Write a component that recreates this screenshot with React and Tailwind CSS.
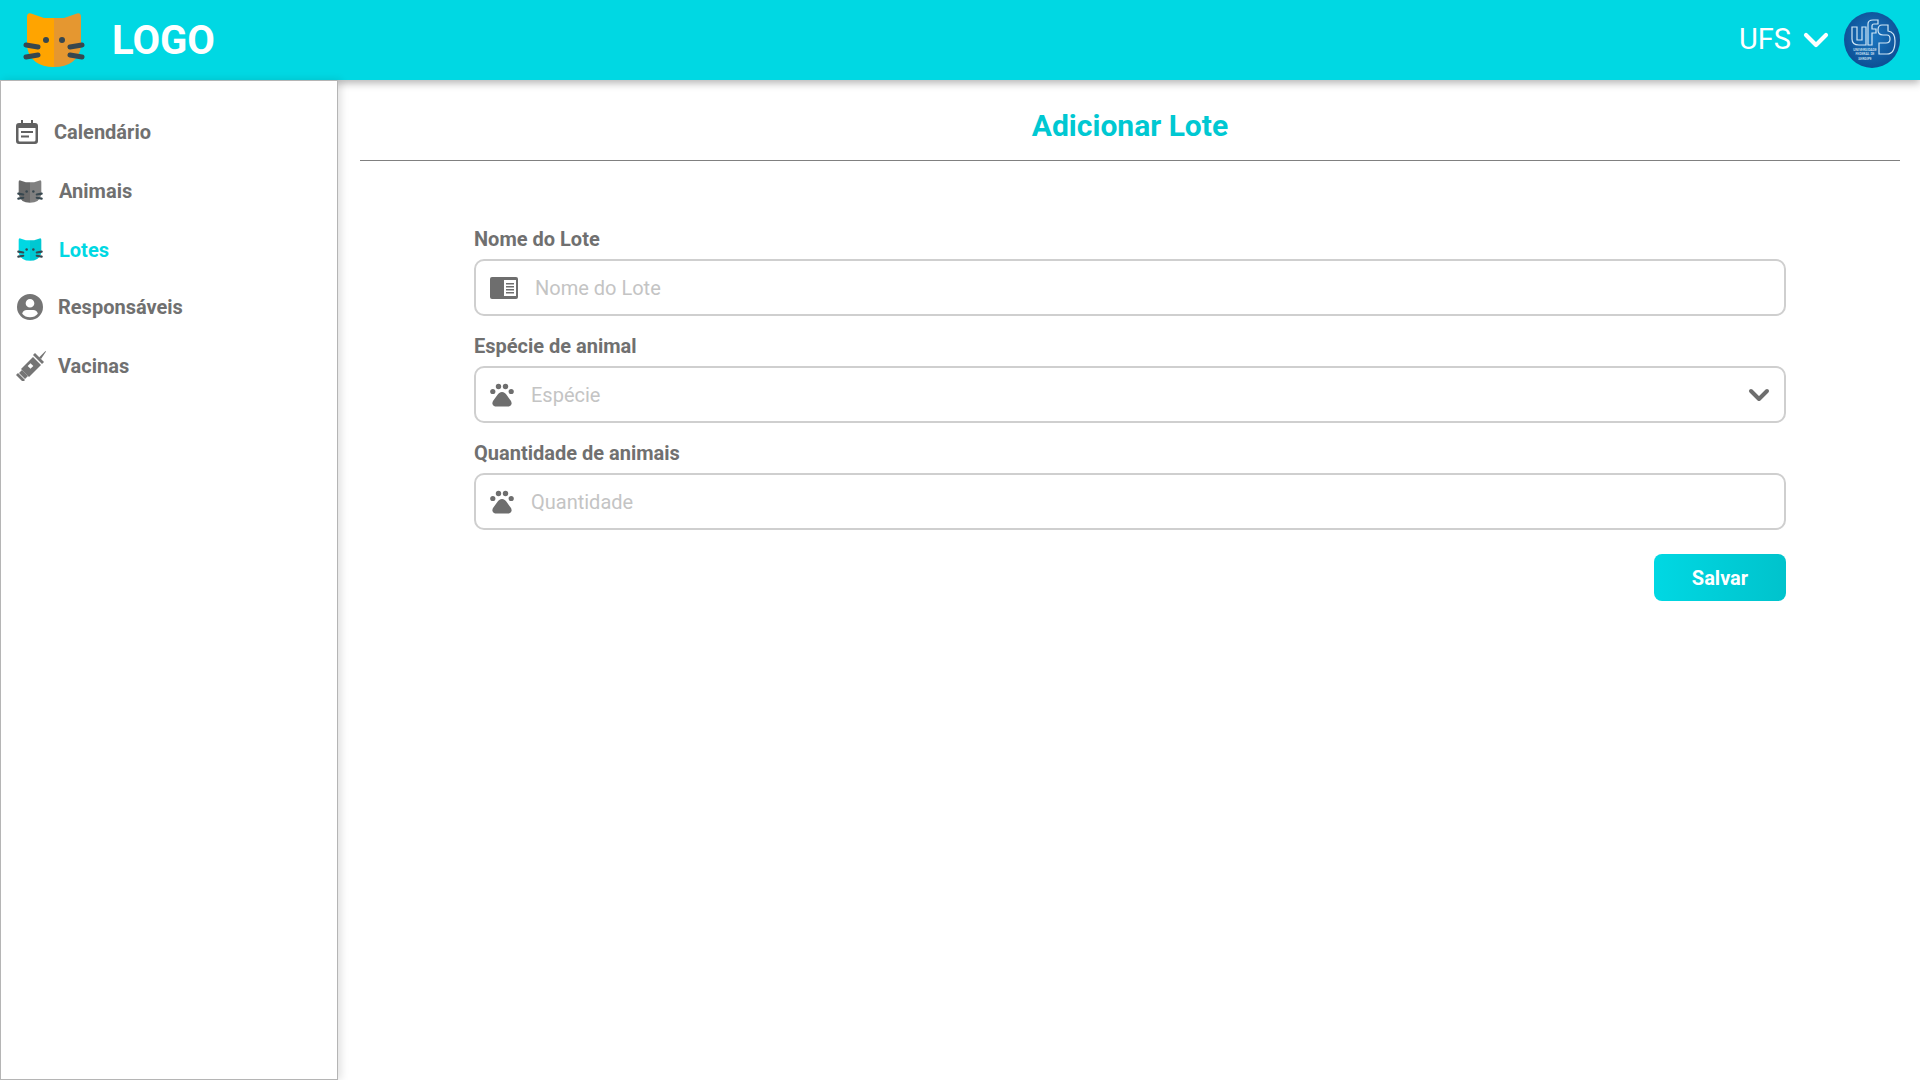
import { ChevronDown } from 'lucide-react'

function CatIcon({ left = '#ffa400', right = '#e59730', whisker = '#37474f', className = '' }) {
  return (
    <svg viewBox="0 0 62 54" className={className}>
      <path d="M31 5 L21 5 L8 0.5 Q4 -0.5 4 4 L4 34 Q8 54 31 54 Z" fill={left} />
      <path d="M31 5 L41 5 L54 0.5 Q58 -0.5 58 4 L58 34 Q54 54 31 54 Z" fill={right} />
      <circle cx="23" cy="27" r="3" fill={whisker} />
      <circle cx="39" cy="27" r="3" fill={whisker} />
      <g stroke={whisker} strokeWidth="5" strokeLinecap="round">
        <path d="M3 32 L15 34" />
        <path d="M3 44 L15 42" />
        <path d="M59 32 L47 34" />
        <path d="M59 44 L47 42" />
      </g>
    </svg>
  )
}

function UfsLogo() {
  return (
    <svg viewBox="0 0 56 56" className="w-[56px] h-[56px]">
      <defs>
        <radialGradient id="ufsBg" cx="50%" cy="45%" r="55%">
          <stop offset="0%" stopColor="#1b78c2" />
          <stop offset="100%" stopColor="#0d4f94" />
        </radialGradient>
      </defs>
      <circle cx="28" cy="28" r="28" fill="url(#ufsBg)" />
      <g fill="none" stroke="#cfe6f5" strokeWidth="1.2">
        <path d="M8 15 V27 Q8 33 15 33 H22 V15 H18 V28 H13 V15 Z" />
        <path d="M24 33 V12 Q24 8 29 8 H34 V12 H30 Q28 12 28 14 V17 H32 V21 H28 V33 Z" />
        <path d="M44 13 H38 Q34 13 34 18 Q34 23 39 23 H43 Q46 23 46 27 Q46 31 42 31 H35 V42 H43 Q51 42 51 29 Q51 20 44 19 Z" />
      </g>
      <g fill="#dbeaf5" fontFamily="Roboto, sans-serif" fontSize="3.4" fontWeight="500" textAnchor="middle">
        <text x="21" y="38.5">UNIVERSIDADE</text>
        <text x="21" y="43">FEDERAL DE</text>
        <text x="21" y="47.5">SERGIPE</text>
      </g>
    </svg>
  )
}

function CalendarIcon() {
  return (
    <svg viewBox="0 0 22 24" className="w-[22px] h-[24px]" fill="#616161">
      <path d="M5 0 H7 V3 H15 V0 H17 V3 H19 Q22 3 22 6 V21 Q22 24 19 24 H3 Q0 24 0 21 V6 Q0 3 3 3 H5 Z M2.5 8 V20 Q2.5 21.5 4 21.5 H18 Q19.5 21.5 19.5 20 V8 Z" />
      <rect x="5" y="11" width="12" height="2" />
      <rect x="5" y="15.5" width="8" height="2" />
    </svg>
  )
}

function UserIcon() {
  return (
    <svg viewBox="0 0 24 24" className="w-[26px] h-[26px]" fill="#757575">
      <path d="M12 0 A12 12 0 1 0 12 24 A12 12 0 1 0 12 0 Z M12 4.5 A4 4 0 1 1 12 12.5 A4 4 0 1 1 12 4.5 Z M12 21.5 Q7.5 21.5 4.8 18.2 Q5.6 14.8 9 14.8 H15 Q18.4 14.8 19.2 18.2 Q16.5 21.5 12 21.5 Z" />
    </svg>
  )
}

function SyringeIcon() {
  return (
    <svg viewBox="0 0 30 30" className="w-[30px] h-[30px]">
      <g fill="#757575">
        <path d="M5 18 L17 6 L25 14 L13 26 Z" />
        <path d="M0 24 L2 22 L9 29 L7 31 Z" />
        <path d="M3 22 L6 19 L12 25 L9 28 Z" />
        <path d="M17 4 L19 2 L28 11 L26 13 Z" />
        <path d="M23 6.5 L29.5 0 L30 0.5 L25 8 Z" />
      </g>
      <rect x="12.5" y="13" width="4" height="4" fill="#ffffff" transform="rotate(45 14.5 15)" />
    </svg>
  )
}

function BookIcon() {
  return (
    <svg viewBox="0 0 28 22" className="w-[28px] h-[22px]">
      <rect width="28" height="22" rx="2" fill="#6e6e6e" />
      <rect x="14" y="3" width="12" height="16" fill="#ffffff" />
      <g fill="#6e6e6e">
        <rect x="16" y="6" width="8" height="1.5" />
        <rect x="16" y="9" width="8" height="1.5" />
        <rect x="16" y="12" width="8" height="1.5" />
        <rect x="16" y="15" width="8" height="1.5" />
      </g>
    </svg>
  )
}

function PawIcon() {
  return (
    <svg viewBox="0 0 24 24" className="w-[24px] h-[24px]" fill="#6e6e6e">
      <circle cx="2.8" cy="8.5" r="2.6" />
      <circle cx="8.5" cy="3.5" r="2.7" />
      <circle cx="15.5" cy="3.5" r="2.7" />
      <circle cx="21.2" cy="8.5" r="2.6" />
      <path d="M12 9 Q15 9 17 12.5 L21 18 Q23 22.5 19 23.5 H5 Q1 22.5 3 18 L7 12.5 Q9 9 12 9 Z" />
    </svg>
  )
}

function NavItem({ icon, label, active, textClass, rowClass }) {
  return (
    <div className={`flex items-center ${rowClass}`}>
      {icon}
      <span className={`text-[20px] font-bold ${textClass} ${active ? 'text-[#00d8e3]' : 'text-[#707070]'}`}>{label}</span>
    </div>
  )
}

function Field({ label, icon, placeholder, textClass, chevron }) {
  return (
    <div className="flex flex-col">
      <label className="text-[20px] font-bold text-[#707070] h-[28px] leading-[28px] mb-[6px]">{label}</label>
      <div className="h-[57px] border-2 border-[#cfcfcf] rounded-[10px] flex items-center pl-[14px] pr-[9px] bg-white">
        {icon}
        <span className={`text-[20px] text-[#c4c4c4] flex-1 ${textClass}`}>{placeholder}</span>
        {chevron && <ChevronDown size={32} strokeWidth={3} color="#6e6e6e" />}
      </div>
    </div>
  )
}

export default function App() {
  return (
    <div className="w-[1920px] h-[1080px] flex flex-col bg-white overflow-hidden font-['Roboto',sans-serif]">
      <header className="relative z-10 h-[80px] shrink-0 bg-[#00d8e3] shadow-[0_3px_8px_rgba(0,0,0,0.3)] flex items-center justify-between pl-[23px] pr-[20px]">
        <div className="flex items-center">
          <CatIcon className="w-[62px] h-[54px]" />
          <span className="ml-[27px] mt-[2px] text-[40px] font-bold text-white">LOGO</span>
        </div>
        <div className="flex items-center">
          <span className="text-[29px] text-white">UFS</span>
          <ChevronDown size={40} strokeWidth={2.5} color="#ffffff" className="ml-[5px]" />
          <div className="ml-[8px]"><UfsLogo /></div>
        </div>
      </header>
      <div className="flex flex-1 min-h-0">
        <aside className="relative z-20 w-[338px] shrink-0 border border-[#b5b5b5] shadow-[3px_0_8px_rgba(0,0,0,0.12)] pt-[22px] bg-white">
          <NavItem rowClass="pl-[15px] h-[58px]" icon={<CalendarIcon />} label="Calendário" textClass="ml-[16px]" />
          <NavItem rowClass="pl-[16px] h-[60px]" icon={<CatIcon left="#6a6a6a" right="#808080" className="w-[26px] h-[23px]" />} label="Animais" textClass="ml-[16px]" />
          <NavItem rowClass="pl-[16px] h-[57px]" active icon={<CatIcon left="#00d8e3" right="#00c8d2" className="w-[26px] h-[23px]" />} label="Lotes" textClass="ml-[16px]" />
          <NavItem rowClass="pl-[16px] h-[57px]" icon={<UserIcon />} label="Responsáveis" textClass="ml-[15px]" />
          <NavItem rowClass="pl-[15px] h-[62px]" icon={<SyringeIcon />} label="Vacinas" textClass="ml-[12px]" />
        </aside>
        <main className="flex-1 pl-[22px] pr-[20px]">
          <div className="h-[81px] pt-[10px] border-b border-[#808080] flex items-center justify-center">
            <h1 className="text-[30px] font-bold text-[#00c8d2]">Adicionar Lote</h1>
          </div>
          <form className="mt-[64px] mx-[114px] flex flex-col gap-[16px]">
            <Field label="Nome do Lote" icon={<BookIcon />} placeholder="Nome do Lote" textClass="ml-[17px]" />
            <Field label="Espécie de animal" icon={<PawIcon />} placeholder="Espécie" textClass="ml-[17px]" chevron />
            <Field label="Quantidade de animais" icon={<PawIcon />} placeholder="Quantidade" textClass="ml-[17px]" />
          </form>
          <div className="mx-[114px] mt-[24px] flex justify-end">
            <button type="button" className="w-[132px] h-[47px] rounded-[8px] bg-gradient-to-r from-[#00d8e3] to-[#00c3cc] text-white text-[20px] font-bold">Salvar</button>
          </div>
        </main>
      </div>
    </div>
  )
}
